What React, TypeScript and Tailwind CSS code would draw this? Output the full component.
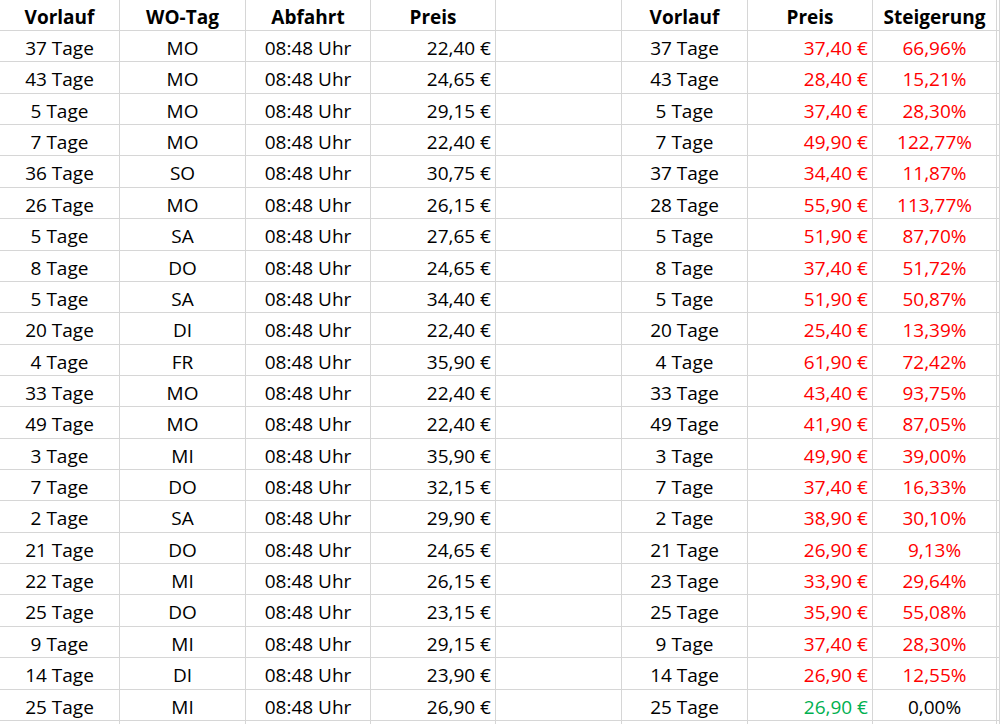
const left: [string, string, string][] = [
  ["37", "MO", "22,40"],
  ["43", "MO", "24,65"],
  ["5", "MO", "29,15"],
  ["7", "MO", "22,40"],
  ["36", "SO", "30,75"],
  ["26", "MO", "26,15"],
  ["5", "SA", "27,65"],
  ["8", "DO", "24,65"],
  ["5", "SA", "34,40"],
  ["20", "DI", "22,40"],
  ["4", "FR", "35,90"],
  ["33", "MO", "22,40"],
  ["49", "MO", "22,40"],
  ["3", "MI", "35,90"],
  ["7", "DO", "32,15"],
  ["2", "SA", "29,90"],
  ["21", "DO", "24,65"],
  ["22", "MI", "26,15"],
  ["25", "DO", "23,15"],
  ["9", "MI", "29,15"],
  ["14", "DI", "23,90"],
  ["25", "MI", "26,90"],
];

const right: [string, string, string][] = [
  ["37", "37,40", "66,96%"],
  ["43", "28,40", "15,21%"],
  ["5", "37,40", "28,30%"],
  ["7", "49,90", "122,77%"],
  ["37", "34,40", "11,87%"],
  ["28", "55,90", "113,77%"],
  ["5", "51,90", "87,70%"],
  ["8", "37,40", "51,72%"],
  ["5", "51,90", "50,87%"],
  ["20", "25,40", "13,39%"],
  ["4", "61,90", "72,42%"],
  ["33", "43,40", "93,75%"],
  ["49", "41,90", "87,05%"],
  ["3", "49,90", "39,00%"],
  ["7", "37,40", "16,33%"],
  ["2", "38,90", "30,10%"],
  ["21", "26,90", "9,13%"],
  ["23", "33,90", "29,64%"],
  ["25", "35,90", "55,08%"],
  ["9", "37,40", "28,30%"],
  ["14", "26,90", "12,55%"],
  ["25", "26,90", "0,00%"],
];

const cols = "grid grid-cols-[120px_126px_125px_125px_126px_126px_125px_124px_1fr]";
const cell = "border-r border-[#d6d6d6] flex items-center pt-[3px] whitespace-nowrap";

export default function App() {
  return (
    <div
      className="h-[724px] w-[1000px] overflow-hidden bg-white text-[19px] text-black"
      style={{ fontFamily: '"Open Sans", sans-serif' }}
    >
      <div className={`${cols} h-[31px] border-b border-[#d6d6d6] font-bold`}>
        <div className={`${cell} justify-center`}>Vorlauf</div>
        <div className={`${cell} justify-center`}>WO-Tag</div>
        <div className={`${cell} justify-center`}>Abfahrt</div>
        <div className={`${cell} justify-center`}>Preis</div>
        <div className={cell}></div>
        <div className={`${cell} justify-center`}>Vorlauf</div>
        <div className={`${cell} justify-center`}>Preis</div>
        <div className={`${cell} justify-center`}>Steigerung</div>
        <div className={cell}></div>
      </div>
      {left.map((row, i) => {
        const r = right[i];
        const last = i === left.length - 1;
        const red = last ? "text-[#00b050]" : "text-[#ff0000]";
        return (
          <div key={i} className={`${cols} h-[31.36px] border-b border-[#d6d6d6]`}>
            <div className={`${cell} justify-center`}>{row[0]} Tage</div>
            <div className={`${cell} justify-center`}>{row[1]}</div>
            <div className={`${cell} justify-center`}>08:48 Uhr</div>
            <div className={`${cell} justify-end pr-[4px]`}>{row[2]} €</div>
            <div className={cell}></div>
            <div className={`${cell} justify-center`}>{r[0]} Tage</div>
            <div className={`${cell} justify-end pr-[4px] ${red}`}>{r[1]} €</div>
            <div className={`${cell} justify-center ${last ? "" : "text-[#ff0000]"}`}>{r[2]}</div>
            <div className={cell}></div>
          </div>
        );
      })}
      <div className={`${cols} h-[20px]`}>
        {Array.from({ length: 9 }).map((_, i) => (
          <div key={i} className={cell}></div>
        ))}
      </div>
    </div>
  );
}
